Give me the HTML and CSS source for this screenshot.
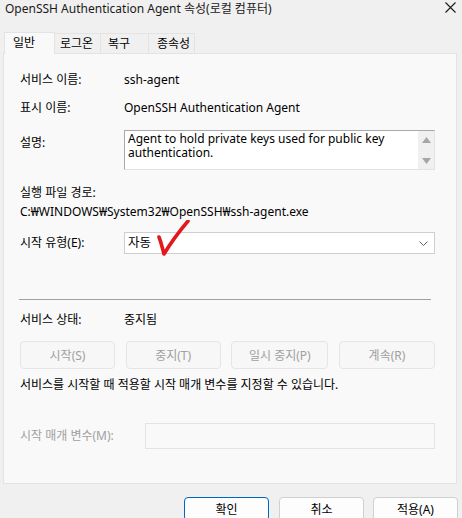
FILE: index.html
```html
<!DOCTYPE html>
<html lang="ko">
<head>
    <meta charset="UTF-8">
    <title>OpenSSH Authentication Agent 속성(로컬 컴퓨터)</title>
    <link rel="stylesheet" href="styles.css">
</head>
<body>
    <div class="titlebar">
        <span class="title">OpenSSH Authentication Agent 속성(로컬 컴퓨터)</span>
        <svg class="close" width="11" height="11" viewBox="0 0 11 11">
            <path d="M0.5 0.5 L10.5 10.5 M10.5 0.5 L0.5 10.5" stroke="#1a1a1a" stroke-width="1.1" fill="none"/>
        </svg>
    </div>

    <!-- Tabs -->
    <div class="tabs">
        <div class="tab active">일반</div>
        <div class="tab">로그온</div>
        <div class="tab">복구</div>
        <div class="tab">종속성</div>
    </div>

    <div class="panel">
        <div class="row row-name">
            <span class="label">서비스 이름:</span>
            <span class="value">ssh-agent</span>
        </div>
        <div class="row row-display">
            <span class="label">표시 이름:</span>
            <span class="value">OpenSSH Authentication Agent</span>
        </div>
        <div class="row row-desc">
            <span class="label">설명:</span>
            <div class="textbox">
                <div class="textbox-text">Agent to hold private keys used for public key authentication.</div>
                <div class="scrollbar">
                    <svg width="9" height="6" viewBox="0 0 9 6"><path d="M0 6 L4.5 0 L9 6 Z" fill="#a6a6a6"/></svg>
                    <svg width="9" height="6" viewBox="0 0 9 6"><path d="M0 0 L4.5 6 L9 0 Z" fill="#a6a6a6"/></svg>
                </div>
            </div>
        </div>
        <div class="exe-label">실행 파일 경로:</div>
        <div class="exe-path">C:₩WINDOWS₩System32₩OpenSSH₩ssh-agent.exe</div>
        <div class="row row-start">
            <span class="label">시작 유형(E):</span>
            <div class="select">
                <span>자동</span>
                <svg class="chevron" width="9" height="5" viewBox="0 0 9 5"><path d="M0.5 0.5 L4.5 4.5 L8.5 0.5" stroke="#606060" stroke-width="1" fill="none"/></svg>
                <svg class="check" width="40" height="40" viewBox="0 0 40 40">
                    <path d="M2 17 C4 22 5 27 7 34 C13 24 20 14 31 1" stroke="#e3181c" stroke-width="3.6" stroke-linecap="round" stroke-linejoin="round" fill="none"/>
                </svg>
            </div>
        </div>

        <hr class="separator">

        <div class="row row-status">
            <span class="label">서비스 상태:</span>
            <span class="value">중지됨</span>
        </div>
        <div class="actions">
            <button class="btn-disabled w95">시작(S)</button>
            <button class="btn-disabled w95">중지(T)</button>
            <button class="btn-disabled w97">일시 중지(P)</button>
            <button class="btn-disabled w96">계속(R)</button>
        </div>
        <div class="hint">서비스를 시작할 때 적용할 시작 매개 변수를 지정할 수 있습니다.</div>
        <div class="row row-params">
            <span class="label label-params">시작 매개 변수(M):</span>
            <div class="params-input"></div>
        </div>
    </div>

    <div class="footer">
        <button class="btn primary">확인</button>
        <button class="btn">취소</button>
        <button class="btn">적용(A)</button>
    </div>
</body>
</html>
```

FILE: styles.css
```css
body {
    margin: 0;
    width: 462px;
    height: 518px;
    overflow: hidden;
    background-color: #f0f0f0;
    color: #000;
    font-family: "Noto Sans", "Noto Sans CJK KR", sans-serif;
    font-size: 12px;
}
.titlebar {
    height: 31px;
    display: flex;
    justify-content: space-between;
    padding: 0 6px 0 5px;
    box-sizing: border-box;
}
.title {
    line-height: 17px;
    font-size: 12px;
    color: #1a1a1a;
}
.close {
    margin-top: 2px;
}
.tabs {
    display: flex;
    align-items: flex-end;
    height: 22px;
    padding-left: 4px;
}
.tab {
    height: 20px;
    line-height: 20px;
    border: 1px solid #e3e3e3;
    border-bottom: none;
    margin-left: -1px;
    background-color: #f0f0f0;
    padding: 0 0 0 6px;
    box-sizing: border-box;
    white-space: nowrap;
}
.tab:nth-child(2) { width: 47px; padding-left: 5px; }
.tab:nth-child(3) { width: 49px; padding-left: 7px; }
.tab:nth-child(4) { width: 47px; padding-left: 8px; }
.tab.active {
    width: 51px;
    height: 22px;
    line-height: 20px;
    margin-left: 0;
    background-color: #f9f9f9;
    padding-left: 8px;
    position: relative;
    z-index: 1;
    margin-bottom: -1px;
}
.panel {
    margin-left: 3px;
    width: 454px;
    height: 431px;
    box-sizing: border-box;
    border: 1px solid #e3e3e3;
    background-color: #f9f9f9;
    padding: 16px 0 0 16px;
    display: flex;
    flex-direction: column;
}
.row {
    display: flex;
    line-height: 20px;
}
.label {
    width: 104px;
    flex-shrink: 0;
}
.row-display {
    margin-top: 8px;
}
.row-desc {
    margin-top: 12px;
}
.row-desc .label {
    padding-top: 3px;
}
.textbox {
    width: 311px;
    height: 40px;
    box-sizing: border-box;
    border: 1px solid;
    border-color: #a8a8a8 #e3e3e3 #e3e3e3 #a8a8a8;
    background-color: #fff;
    display: flex;
}
.textbox-text {
    flex: 1;
    padding: 1px 0 0 3px;
    line-height: 14px;
}
.scrollbar {
    width: 16px;
    background-color: #f0f0f0;
    display: flex;
    flex-direction: column;
    align-items: center;
    justify-content: space-between;
    padding: 6px 0 5px;
    box-sizing: border-box;
}
.exe-label {
    margin-top: 13px;
    line-height: 20px;
}
.exe-path {
    line-height: 18px;
}
.row-start {
    margin-top: 11px;
    align-items: center;
}
.select {
    position: relative;
    width: 311px;
    height: 22px;
    box-sizing: border-box;
    border: 1px solid #cfcfcf;
    background-color: #fff;
    display: flex;
    align-items: center;
    justify-content: space-between;
    padding: 0 6px 0 3px;
    font-size: 12.5px;
}
.check {
    position: absolute;
    left: 32px;
    top: -13px;
}
.separator {
    width: 412px;
    margin: 45px 0 0 -1px;
    border: none;
    border-top: 1px solid #a0a0a0;
    height: 0;
}
.row-status {
    margin-top: 10px;
}
.actions {
    margin-top: 11px;
    width: 415px;
    display: flex;
    justify-content: space-between;
}
.actions button,
.footer button {
    font-family: inherit;
    font-size: 12px;
    padding: 0;
}
.btn-disabled {
    height: 28px;
    border: 1px solid #e5e5e5;
    border-radius: 4px;
    background-color: #f7f7f7;
    color: #a0a0a0;
}
.w95 { width: 95px; }
.w96 { width: 96px; }
.w97 { width: 97px; }
.hint {
    margin-top: 6px;
    line-height: 20px;
}
.row-params {
    margin-top: 28px;
    align-items: center;
}
.label-params {
    width: 125px;
    color: #a0a0a0;
}
.params-input {
    width: 290px;
    height: 26px;
    box-sizing: border-box;
    border: 1px solid #e3e3e3;
    background-color: #f9f9f9;
}
.footer {
    display: flex;
    justify-content: flex-end;
    gap: 9px;
    padding: 13px 4px 0 0;
}
.btn {
    width: 85px;
    height: 24px;
    border: 1px solid #d0d0d0;
    border-radius: 4px;
    background-color: #fdfdfd;
    color: #000;
}
.btn.primary {
    border-color: #0067c0;
    margin-right: 1px;
}
```
